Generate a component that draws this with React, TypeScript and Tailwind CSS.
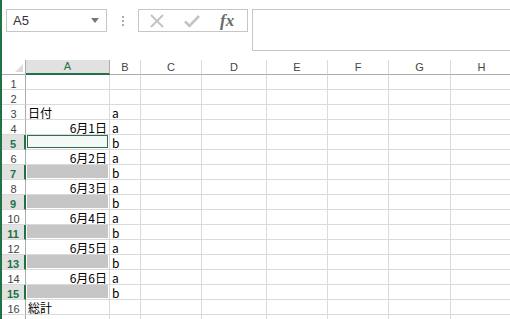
import type { ReactNode } from "react";

const cols = [
  { key: "A", w: "w-[84px]" },
  { key: "B", w: "w-[31px]" },
  { key: "C", w: "w-[61px]" },
  { key: "D", w: "w-[65px]" },
  { key: "E", w: "w-[61px]" },
  { key: "F", w: "w-[61px]" },
  { key: "G", w: "w-[62px]" },
  { key: "H", w: "w-[62px]" },
];

type Row = { a?: string; align?: "left" | "right"; b?: string; sel?: "active" | "range" };

const rows: Row[] = [
  {},
  {},
  { a: "日付", b: "a" },
  { a: "6月1日", align: "right", b: "a" },
  { b: "b", sel: "active" },
  { a: "6月2日", align: "right", b: "a" },
  { b: "b", sel: "range" },
  { a: "6月3日", align: "right", b: "a" },
  { b: "b", sel: "range" },
  { a: "6月4日", align: "right", b: "a" },
  { b: "b", sel: "range" },
  { a: "6月5日", align: "right", b: "a" },
  { b: "b", sel: "range" },
  { a: "6月6日", align: "right", b: "a" },
  { b: "b", sel: "range" },
  { a: "総計", b: "" },
];

const cellFont = "font-['MS_PGothic','Noto_Sans_CJK_JP',sans-serif] text-[12px] leading-[13px] text-black";

const Cell = ({ w, children, className = "" }: { w: string; children?: ReactNode; className?: string }) => (
  <div className={`${w} h-[15px] shrink-0 overflow-hidden border-r border-b border-[#dadada] ${className}`}>
    {children}
  </div>
);

const Toolbar = () => (
  <div className="flex h-[60px] items-start pt-[9px] pl-[4px]">
    <div className="flex h-[23px] w-[101px] items-center justify-between border border-[#c6c6c6] pl-[6px] pr-[7px]">
      <span className="font-['Liberation_Sans',sans-serif] text-[13px] text-[#333]">A5</span>
      <svg width="8" height="5" viewBox="0 0 8 5">
        <path d="M0 0h8L4 5z" fill="#777" />
      </svg>
    </div>
    <div className="flex h-[23px] w-[31px] flex-col items-center justify-center gap-[2px]">
      <span className="h-[2px] w-[2px] bg-[#aaa]" />
      <span className="h-[2px] w-[2px] bg-[#aaa]" />
      <span className="h-[2px] w-[2px] bg-[#aaa]" />
    </div>
    <div className="flex h-[23px] w-[110px] items-center border border-[#c6c6c6] pl-[10px]">
      <svg width="16" height="16" viewBox="0 0 16 16">
        <path d="M2 2l12 12M14 2L2 14" stroke="#c4c4c4" strokeWidth="2" fill="none" />
      </svg>
      <svg className="ml-[19px]" width="16" height="16" viewBox="0 0 16 16">
        <path d="M1 8.5l4.5 4.5L15 3" stroke="#c4c4c4" strokeWidth="2.6" fill="none" />
      </svg>
      <span className="ml-[20px] font-['Liberation_Serif',serif] text-[17px] font-bold italic leading-none text-[#6a6a6a]">
        fx
      </span>
    </div>
    <div className="ml-[4px] h-[42px] flex-1 border border-r-0 border-[#c6c6c6]" />
  </div>
);

export default function App() {
  return (
    <div className="h-[319px] w-[510px] overflow-hidden border-l-2 border-[#217346] bg-white">
      <Toolbar />
      <div className="flex flex-col">
        <div className="flex">
          <div className="relative h-[15px] w-[24px] shrink-0 border-r border-b border-[#ababab]">
            <svg className="absolute right-[2px] bottom-[2px]" width="8" height="8" viewBox="0 0 8 8">
              <path d="M8 0v8H0z" fill="#dcdcdc" />
            </svg>
          </div>
          {cols.map((c) => (
            <div
              key={c.key}
              className={`${c.w} flex h-[15px] shrink-0 items-center justify-center border-r font-['Liberation_Sans',sans-serif] text-[11px] ${
                c.key === "A"
                  ? "border-b-2 border-r-[#ababab] border-b-[#217346] bg-[#e1e1e1] text-[#217346]"
                  : "border-b border-r-[#dadada] border-b-[#ababab] text-[#444]"
              }`}
            >
              {c.key}
            </div>
          ))}
        </div>
        {rows.map((r, i) => {
          const sel = !!r.sel;
          return (
            <div key={i} className="flex">
              <div
                className={`flex h-[15px] w-[24px] shrink-0 items-center justify-center border-b border-[#dadada] pt-[4px] font-['Liberation_Sans',sans-serif] text-[11px] leading-[11px] ${
                  sel
                    ? "border-r-2 border-r-[#217346] bg-[#e1e1e1] font-bold text-[#217346]"
                    : "border-r border-r-[#ababab] text-[#444]"
                }`}
              >
                {i + 1}
              </div>
              <Cell w="w-[84px]" className={`relative ${cellFont}`}>
                {r.sel === "active" && (
                  <div className="absolute inset-x-[1px] top-0 bottom-[1px] border border-[#2f6e4c] bg-[#f4f8f6]" />
                )}
                {r.sel === "range" && <div className="absolute inset-x-[1px] top-0 bottom-[1px] bg-[#c6c6c6]" />}
                {r.a && (
                  <div className={`px-[2px] pt-[1px] ${r.align === "right" ? "text-right" : "text-left"}`}>{r.a}</div>
                )}
              </Cell>
              <Cell w="w-[31px]" className={cellFont}>
                <div className="px-[2px] pt-[1px]">{r.b}</div>
              </Cell>
              {cols.slice(2).map((c) => (
                <Cell key={c.key} w={c.w} />
              ))}
            </div>
          );
        })}
        <div className="flex">
          <div className="h-[15px] w-[24px] shrink-0 border-r border-[#ababab]" />
          {cols.map((c) => (
            <div key={c.key} className={`${c.w} h-[15px] shrink-0 border-r border-[#dadada]`} />
          ))}
        </div>
      </div>
    </div>
  );
}
